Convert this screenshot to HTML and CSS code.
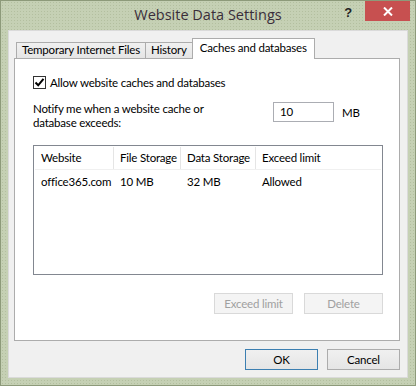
FILE: index.html
```html
<!DOCTYPE html>
<html lang="en">
<head>
    <meta charset="UTF-8">
    <meta name="viewport" content="width=device-width, initial-scale=1.0">
    <title>Website Data Settings</title>
    <link rel="stylesheet" href="styles.css">
</head>
<body>
    <div class="window">
        <div class="title-bar">
            <span></span>
            <span class="title">Website Data Settings</span>
            <div class="title-buttons">
                <span class="help">?</span>
                <span class="close">
                    <svg width="10" height="9" viewBox="0 0 10 9">
                        <path d="M1 0.5 L9 8.5 M9 0.5 L1 8.5" stroke="#fff" stroke-width="2"/>
                    </svg>
                </span>
            </div>
        </div>

        <div class="client">
            <div class="tabs">
                <div class="tab">Temporary Internet Files</div>
                <div class="tab">History</div>
                <div class="tab active">Caches and databases</div>
            </div>

            <div class="panel">
                <label class="check-row">
                    <span class="checkbox">
                        <svg width="11" height="11" viewBox="0 0 11 11">
                            <path d="M1.5 5.5 L4.2 8.3 L9.5 1.8" fill="none" stroke="#000" stroke-width="2"/>
                        </svg>
                    </span>
                    Allow website caches and databases
                </label>

                <div class="notify-row">
                    <div class="notify-text">Notify me when a website cache or<br>database exceeds:</div>
                    <div class="size-box">10</div>
                    <span class="unit">MB</span>
                </div>

                <div class="list">
                    <div class="list-row list-head">
                        <span class="col-site">Website</span>
                        <span class="col-file">File Storage</span>
                        <span class="col-data">Data Storage</span>
                        <span class="col-limit">Exceed limit</span>
                    </div>
                    <div class="list-row">
                        <span class="col-site">office365.com</span>
                        <span class="col-file">10 MB</span>
                        <span class="col-data">32 MB</span>
                        <span class="col-limit">Allowed</span>
                    </div>
                </div>

                <div class="panel-buttons">
                    <button class="btn" disabled>Exceed limit</button>
                    <button class="btn" disabled>Delete</button>
                </div>
            </div>

            <div class="dialog-buttons">
                <button class="btn default">OK</button>
                <button class="btn">Cancel</button>
            </div>
        </div>
    </div>
</body>
</html>
```

FILE: styles.css
```css
* {
    margin: 0;
    padding: 0;
    box-sizing: border-box;
}

body {
    font-family: Lato, "Noto Sans", sans-serif;
    font-size: 11.5px;
    letter-spacing: -0.2px;
    color: #000;
    background: #c5d0b4;
}

.window {
    width: 416px;
    height: 386px;
    display: flex;
    flex-direction: column;
    background-color: #c5d0b4;
    background-image: radial-gradient(#b3bf9f 0.6px, transparent 0.8px);
    background-size: 3px 3px;
    border: 1px solid #8d9a7a;
}

/* title bar */
.title-bar {
    height: 29px;
    display: grid;
    grid-template-columns: 1fr auto 1fr;
    align-items: start;
}

.title {
    font-family: "Open Sans", "Noto Sans", sans-serif;
    font-size: 14.5px;
    letter-spacing: 0;
    color: #3a2e3a;
    padding-top: 4px;
}

.title-buttons {
    display: flex;
    justify-content: flex-end;
    align-items: flex-start;
}

.help {
    font-family: "Liberation Sans", sans-serif;
    font-weight: bold;
    font-size: 13px;
    color: #222;
    padding: 4px 13px 0 0;
}

.close {
    width: 45px;
    height: 20px;
    margin-right: 5px;
    background: #c75050;
    display: flex;
    align-items: center;
    justify-content: center;
}

/* client area */
.client {
    flex: 1;
    margin: 0 7px 7px 7px;
    background: #f0f0f0;
    border: 1px solid #dadada;
    padding: 7px 7px 0 5px;
}

.tabs {
    display: flex;
    padding-left: 2px;
    height: 20px;
    align-items: flex-end;
}

.tab {
    height: 16px;
    line-height: 14px;
    padding: 0 5px;
    border: 1px solid #acacac;
    border-bottom: none;
    margin-right: -1px;
    background: linear-gradient(#f0f0f0, #e5e5e5);
    white-space: nowrap;
}

.tab.active {
    height: 21px;
    margin-bottom: -1px;
    padding: 2px 7px 0 7px;
    background: #fff;
    position: relative;
    z-index: 1;
}

.panel {
    height: 283px;
    background: #fff;
    border: 1px solid #acacac;
    padding: 17px 16px 0 18px;
}

.check-row {
    display: flex;
    align-items: center;
    gap: 4px;
    height: 13px;
}

.checkbox {
    width: 13px;
    height: 13px;
    border: 1px solid #333;
    display: flex;
    align-items: center;
    justify-content: center;
}

.notify-row {
    display: flex;
    align-items: flex-start;
    margin-top: 13px;
    line-height: 14px;
}

.notify-text {
    width: 240px;
}

.size-box {
    width: 61px;
    height: 20px;
    border: 1px solid #abadb3;
    padding: 2px 6px;
    line-height: 14px;
}

.unit {
    margin: 4px 0 0 8px;
}

/* list view */
.list {
    margin-top: 15px;
    height: 130px;
    border: 1px solid #828790;
    padding: 1px;
}

.list-row {
    display: flex;
    height: 22px;
    align-items: center;
}

.list-head {
    border-bottom: 1px solid #f0f0f0;
    height: 23px;
}

.list-head span {
    border-right: 1px solid #e5e5e5;
    height: 100%;
    line-height: 21px;
}

.list-row span {
    padding-left: 6px;
    white-space: nowrap;
}

.col-site { width: 79px; }
.col-file { width: 67px; }
.col-data { width: 75px; }
.col-limit { width: 125px; }

.list-head .col-limit {
    border-right: none;
}

/* buttons */
.btn {
    font-family: inherit;
    font-size: 11.5px;
    letter-spacing: -0.2px;
    height: 21px;
    border: 1px solid #acacac;
    background: linear-gradient(#f0f0f0, #e5e5e5);
    color: #000;
}

.btn:disabled {
    color: #a0a0a0;
    border-color: #d9d9d9;
    background: #f4f4f4;
}

.panel-buttons {
    display: flex;
    justify-content: flex-end;
    gap: 11px;
    margin-top: 18px;
}

.panel-buttons .btn {
    width: 79px;
}

.dialog-buttons {
    display: flex;
    justify-content: flex-end;
    gap: 9px;
    margin-top: 8px;
}

.dialog-buttons .btn {
    width: 73px;
}

.btn.default {
    border-color: #3c7fb1;
}
```
